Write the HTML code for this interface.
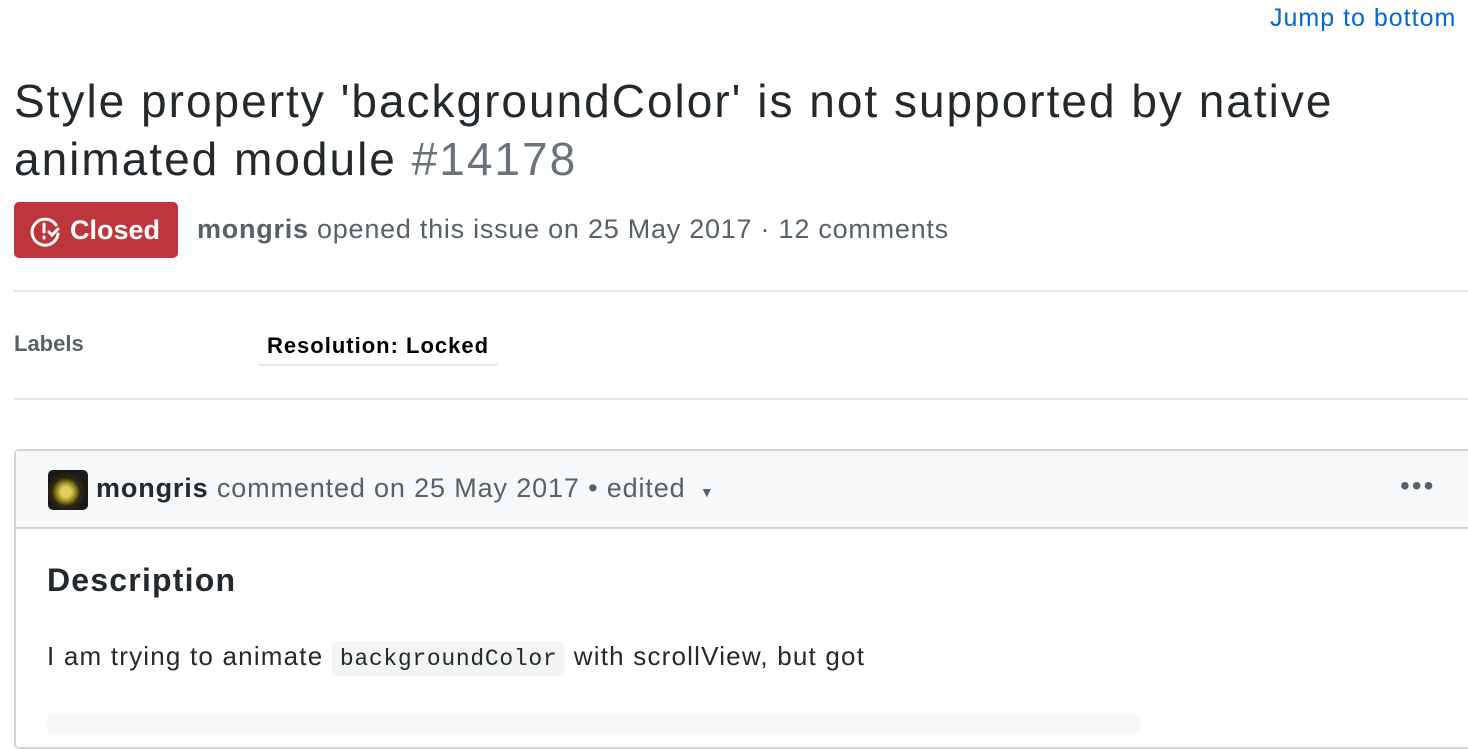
<!DOCTYPE html><html><head><style>
body{margin:0;width:1468px;height:722px;overflow:hidden;background:#fff;font-family:"Liberation Sans",sans-serif;color:#24292e;position:relative}
.a{position:absolute;white-space:nowrap}
</style></head><body>
<div class="a" style="left:1270px;top:4px;font-size:25px;color:#0366d6;letter-spacing:1px">Jump to bottom</div>
<div class="a" style="left:14px;top:72px;font-size:46px;line-height:58px;white-space:normal;width:1454px;letter-spacing:2px">Style property 'backgroundColor' is not supported by native<br>animated module <span style="color:#6a737d">#14178</span></div>
<div class="a" style="left:14px;top:202px;width:164px;height:56px;background:#bc363b;border-radius:5px;color:#fff;font-size:27px;font-weight:bold;line-height:56px">
<svg style="position:absolute;left:16px;top:13px" width="32" height="32" viewBox="0 0 32 32" fill="none" stroke="#fff" stroke-width="3" stroke-linecap="round"><path d="M26 10A13 13 0 1 0 28 19"/><path d="M14 9v8M14 22v1"/><path d="M19 17l3 3 6-6"/></svg>
<span style="position:absolute;left:56px">Closed</span></div>
<div class="a" style="left:197px;top:214px;font-size:27px;color:#586069;letter-spacing:0.75px"><b>mongris</b> opened this issue on 25 May 2017 · 12 comments</div>
<div class="a" style="left:14px;top:290px;width:1454px;height:2px;background:#e1e4e8"></div>
<div class="a" style="left:14px;top:331px;font-size:22px;font-weight:bold;color:#586069">Labels</div>
<div class="a" style="left:258px;top:328px;width:240px;height:36px;border-bottom:2px solid #e1e4e8;border-radius:3px;font-size:22px;font-weight:bold;color:#000;text-align:center;line-height:36px;letter-spacing:1px">Resolution: Locked</div>
<div class="a" style="left:14px;top:398px;width:1454px;height:2px;background:#e1e4e8"></div>
<div class="a" style="left:14px;top:449px;width:1460px;height:300px;border:2px solid #d1d5da;border-radius:5px;box-sizing:border-box"></div>
<div class="a" style="left:16px;top:451px;width:1452px;height:76px;background:#f6f8fa;border-bottom:2px solid #d1d5da"></div>
<div class="a" style="left:48px;top:470px;width:40px;height:40px;border-radius:5px;background:radial-gradient(circle at 45% 55%,#e0d060 0 5px,#a09020 9px,#302a10 14px,#1a1a1a 20px)"></div>
<div class="a" style="left:96px;top:473px;font-size:27px;color:#586069;letter-spacing:0.86px"><b style="color:#24292e">mongris</b> commented on 25 May 2017 • edited <span style="font-size:14px;margin-left:6px">▼</span></div>
<div class="a" style="left:1400px;top:470px;font-size:28px;color:#586069;letter-spacing:2px">•••</div>
<div class="a" style="left:47px;top:562px;font-size:32px;font-weight:bold;letter-spacing:1.2px">Description</div>
<div class="a" style="left:47px;top:641px;font-size:26px;letter-spacing:1.2px">I am trying to animate <span style="display:inline-block;background:#f3f4f4;border-radius:5px;padding:4px 8px;font-family:'Liberation Mono',monospace;font-size:23px;letter-spacing:0.7px">backgroundColor</span> with scrollView, but got</div>
<div class="a" style="left:47px;top:714px;width:1093px;height:20px;background:#f6f8fa;border-radius:5px"></div>
</body></html>
